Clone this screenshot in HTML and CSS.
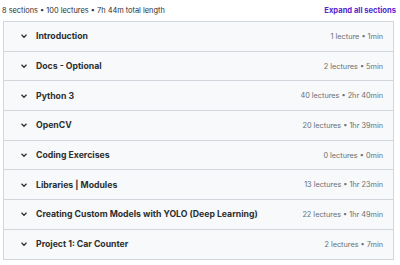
FILE: index.html
```html
<!DOCTYPE html>
<html lang="en">
<head>
  <meta charset="UTF-8" />
  <title>Course content</title>
  <link rel="stylesheet" href="styles.css">
</head>
<body>

  <div class="summary">
    <span class="summary-text">8 sections • 100 lectures • 7h 44m total length</span>
    <button class="expand-all">Expand all sections</button>
  </div>

  <div class="sections">
    <div class="section">
      <span class="chevron"><svg viewBox="0 0 10 10"><path d="M2.5 3.8 L5 6.3 L7.5 3.8" /></svg></span>
      <span class="title">Introduction</span>
      <span class="meta">1 lecture • 1min</span>
    </div>
    <div class="section">
      <span class="chevron"><svg viewBox="0 0 10 10"><path d="M2.5 3.8 L5 6.3 L7.5 3.8" /></svg></span>
      <span class="title">Docs - Optional</span>
      <span class="meta">2 lectures • 5min</span>
    </div>
    <div class="section">
      <span class="chevron"><svg viewBox="0 0 10 10"><path d="M2.5 3.8 L5 6.3 L7.5 3.8" /></svg></span>
      <span class="title">Python 3</span>
      <span class="meta">40 lectures • 2hr 40min</span>
    </div>
    <div class="section">
      <span class="chevron"><svg viewBox="0 0 10 10"><path d="M2.5 3.8 L5 6.3 L7.5 3.8" /></svg></span>
      <span class="title">OpenCV</span>
      <span class="meta">20 lectures • 1hr 39min</span>
    </div>
    <div class="section">
      <span class="chevron"><svg viewBox="0 0 10 10"><path d="M2.5 3.8 L5 6.3 L7.5 3.8" /></svg></span>
      <span class="title">Coding Exercises</span>
      <span class="meta">0 lectures • 0min</span>
    </div>
    <div class="section">
      <span class="chevron"><svg viewBox="0 0 10 10"><path d="M2.5 3.8 L5 6.3 L7.5 3.8" /></svg></span>
      <span class="title">Libraries | Modules</span>
      <span class="meta">13 lectures • 1hr 23min</span>
    </div>
    <div class="section">
      <span class="chevron"><svg viewBox="0 0 10 10"><path d="M2.5 3.8 L5 6.3 L7.5 3.8" /></svg></span>
      <span class="title">Creating Custom Models with YOLO (Deep Learning)</span>
      <span class="meta">22 lectures • 1hr 49min</span>
    </div>
    <div class="section">
      <span class="chevron"><svg viewBox="0 0 10 10"><path d="M2.5 3.8 L5 6.3 L7.5 3.8" /></svg></span>
      <span class="title">Project 1: Car Counter</span>
      <span class="meta">2 lectures • 7min</span>
    </div>
  </div>

</body>
</html>
```

FILE: styles.css
```css
body {
  margin: 0;
  padding: 0 3px 0 3px;
  background: #fff;
  color: #2d2f31;
  font-family: Inter, "Liberation Sans", sans-serif;
  width: 400px;
  box-sizing: border-box;
}

.summary {
  display: flex;
  justify-content: space-between;
  align-items: center;
  height: 21px;
  padding-right: 1px;
}

.summary-text {
  font-size: 7.4px;
  color: #2d2f31;
  margin-left: -1px;
}

.expand-all {
  background: none;
  border: none;
  padding: 0;
  font-family: inherit;
  font-size: 7.6px;
  font-weight: 700;
  color: #5624d0;
  cursor: pointer;
}

.sections {
  width: 391px;
  border: 1px solid #d1d7dc;
  box-sizing: border-box;
}

.section {
  display: flex;
  align-items: center;
  height: 28.7px;
  padding: 0 10px 0 15px;
  background: #f7f9fa;
  border-bottom: 1px solid #d1d7dc;
}

.section:last-child {
  border-bottom: none;
}

.chevron {
  width: 10px;
  height: 10px;
  margin-right: 7px;
  display: flex;
}

.chevron svg {
  width: 10px;
  height: 10px;
  fill: none;
  stroke: #2d2f31;
  stroke-width: 1.3;
}

.title {
  flex: 1;
  font-size: 8.7px;
  font-weight: 700;
}

.meta {
  font-size: 7.3px;
  color: #6a6f73;
}
```
